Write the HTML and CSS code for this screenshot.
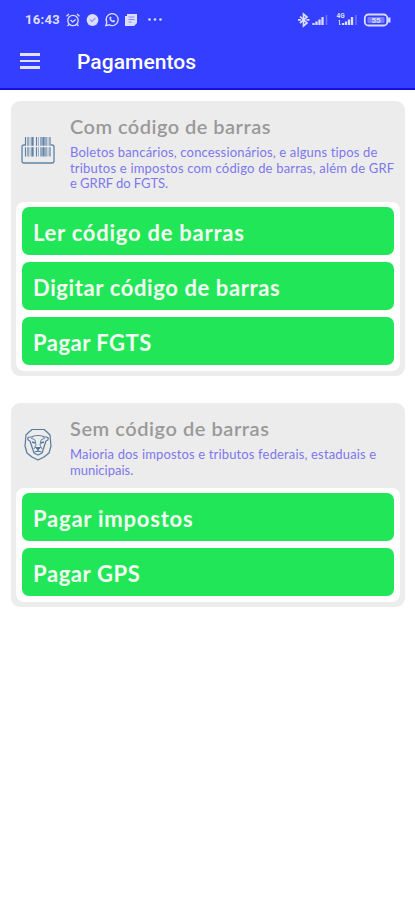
FILE: index.html
```html
<!DOCTYPE html>
<html lang="pt-BR">
<head>
<meta charset="utf-8">
<meta name="viewport" content="width=device-width, initial-scale=1">
<title>Pagamentos</title>
<link rel="stylesheet" href="styles.css">
</head>
<body>
<header class="header">
  <div class="status">
    <time class="clock">16:43</time>
    <svg class="status-left" width="98" height="16" viewBox="0 0 98 16" fill="none" stroke="currentColor" stroke-width="1.3">
      <circle cx="8" cy="8.5" r="5.2"/><path d="M5.5 8l2.2 2 3-2.5M1.500 4.200L4 2M12 2l2.500 2.200M4 12.500l-1.500 1.500M12 12.500l1.500 1.500"/>
      <circle cx="27.500" cy="8" r="5.900" fill="currentColor" stroke="none"/><path d="M25 7.500l2 2 3.300-3.500" stroke="#9b9cff"/>
      <path d="M40.800 13.700l1-3.400A6 6 0 1 1 44.200 12.800z"/><path d="M44.500 5.200c-.8 2.400 2.600 6 5 5l.6-1.500-1.800-.8-.8.8-1.600-1.700.7-.9-.7-1.500z" fill="currentColor" stroke="none"/>
      <path d="M62 2h10v9l-3 3h-9V4h2z" fill="currentColor" stroke="none"/><path d="M63.500 5h6M63.500 7.500h6M63.500 10h3" stroke="#8586ff" stroke-width="1"/>
      <g fill="currentColor" stroke="none"><circle cx="84.500" cy="7.500" r="1.300"/><circle cx="90" cy="7.500" r="1.300"/><circle cx="95.500" cy="7.500" r="1.300"/></g>
    </svg>
    <svg class="status-right" width="94" height="16" viewBox="0 0 94 16" fill="none" stroke="currentColor">
      <path d="M2 4.500l7 6.500-3.500 3V2L9 5l-7 6" stroke-width="1.700"/><path d="M0 7.800h3M8.500 7.800h3" stroke-width="1.700"/>
      <g stroke-width="2.300"><path d="M15.500 13v-2M18.500 13V9.500M21.500 13V7.500M24.500 13V5"/><path d="M28.500 13V3" stroke-width="1.500" opacity=".35"/><path d="M45 13v-2M48 13V9.500M51 13V7.500M54 13V5"/><path d="M58 13V3" stroke-width="1.500" opacity=".35"/></g>
      <path d="M41.500 8v5M40.500 9l1-1M42.500 12l-1 1" stroke-width=".9"/>
      <text class="network" x="38.500" y="5.800">4G</text>
      <rect x="66.800" y="2.500" width="22.500" height="11" rx="3.500" stroke-width="1.800"/><path d="M91.300 5.500v5" stroke-width="2.300"/>
      <rect x="69.500" y="5" width="17" height="6" rx="1" fill="currentColor" stroke="none" opacity=".4"/>
      <text class="charge" x="73.500" y="10.900">55</text>
    </svg>
  </div>
  <div class="toolbar">
    <button class="menu" aria-label="Menu"><i></i><i></i><i></i></button>
    <h1>Pagamentos</h1>
  </div>
</header>
<main>
  <section class="card card-barcode">
    <div class="intro">
      <svg class="icon" width="34" height="30" viewBox="0 0 34 30" fill="none" stroke="#5f82a6">
        <path d="M4.500 9H3a2 2 0 0 0-2 2v14a2 2 0 0 0 2 2h28a2 2 0 0 0 2-2V11a2 2 0 0 0-2-2h-1.500" stroke-width="1.300"/>
        <path d="M4.500 1v19.500M7 1v19.500M15.500 1v19.500M20 1v19.500M25 1v19.500M29 1v19.500" stroke-width="1.200"/>
        <path d="M11.500 1v19.500M22.500 1v19.500" stroke-width="2.300"/><path d="M9 1v19.500M17.500 1v19.500M27 1v19.500" stroke="#9bb2c9" stroke-width="1"/>
        <path d="M2.500 10.500h29" stroke="#ededed" stroke-width="1.400"/>
      </svg>
      <div class="copy">
        <h2>Com código de barras</h2>
        <p><span class="line line-a">Boletos bancários, concessionários, e alguns tipos de</span> <span class="line line-b">tributos e impostos com código de barras, além de GRF</span> <span class="line line-c">e GRRF do FGTS.</span></p>
      </div>
    </div>
    <div class="actions">
      <button class="action read">Ler código de barras</button>
      <button class="action type">Digitar código de barras</button>
      <button class="action fgts">Pagar FGTS</button>
    </div>
  </section>
  <section class="card card-tax">
    <div class="intro">
      <svg class="icon lion" width="34" height="34" viewBox="0 0 34 34" fill="none" stroke="#57799d" stroke-linejoin="round">
        <path d="M11 1.500h12l3 2.500 3 3 1 11-2 7-5 4-6 3-6-3-5-4-2-7 1-11 3-3z" stroke-width="1.200"/>
        <path d="M9 13c-3-1-3-4 0-4h2c2-2 10-2 12 0h2c3 0 3 3 0 4l-2 6-2 6-4 2-4-2-2-6z" stroke-width="1.200"/>
        <path d="M10 10l4 2 1 5-2 4M24 10l-4 2-1 5 2 4" stroke-width=".9"/>
        <path d="M11 14l3 1M23 14l-3 1" stroke-width="1.600"/><path d="M14.500 19.500h5L17 22zM17 22v2M13.500 24l3.500-1 3.500 1" fill="#57799d"/>
      </svg>
      <div class="copy">
        <h2>Sem código de barras</h2>
        <p><span class="line line-d">Maioria dos impostos e tributos federais, estaduais e</span> <span class="line line-e">municipais.</span></p>
      </div>
    </div>
    <div class="actions">
      <button class="action taxes">Pagar impostos</button>
      <button class="action gps">Pagar GPS</button>
    </div>
  </section>
</main>
</body>
</html>
```
FILE: styles.css
```css
* { box-sizing: border-box; }
body { margin: 0; background: #fff; font-family: Lato, sans-serif; }
h1, h2, p { margin: 0; }
button { border: 0; margin: 0; font: inherit; }

.header { height: 90px; background: #343eff; border-bottom: 2px solid #1512dd; color: #fff; padding-top: 12px; }
.status { display: flex; align-items: center; height: 16px; padding: 0 23px 0 25px; color: #dcdeff; }
.clock { width: 40px; font: 700 13px/16px Roboto, sans-serif; letter-spacing: .3px; }
.status-right { margin-left: auto; }
.network { font: 700 6.500px Roboto, sans-serif; fill: currentColor; stroke: none; }
.charge { font: 700 8px Roboto, sans-serif; fill: currentColor; stroke: none; }
.toolbar { display: flex; align-items: center; height: 60px; padding: 8px 20px 0; gap: 37px; }
.toolbar h1 { font: 500 21px/30px Roboto, sans-serif; letter-spacing: .05px; }
.menu { display: flex; flex-direction: column; gap: 4px; width: 20px; padding: 0 0 2px; background: none; }
.menu i { height: 2.500px; background: #e0e2ff; }

main { display: flex; flex-direction: column; gap: 27px; padding: 11px 10px 0 11px; }
.card { background: #edecec; border-radius: 9px; padding: 0 5px 5px; }
.intro { display: flex; height: 101px; padding: 13px 0 0 5px; gap: 15px; }
.card-tax .intro { height: 85px; }
.icon { flex: none; margin-top: 22px; }
.lion { margin-top: 12px; }
h2 { font-size: 20px; font-weight: 600; line-height: 24px; letter-spacing: .47px; color: #999; white-space: nowrap; }
.card-tax h2 { letter-spacing: .55px; }
p { margin-top: 7px; font-size: 13px; line-height: 15.700px; color: #7c77ed; }
.line { display: block; white-space: nowrap; }
.line-a { letter-spacing: .16px; }
.line-b { letter-spacing: .2px; }
.line-c { letter-spacing: -.05px; }
.line-d { letter-spacing: .15px; }
.actions { display: flex; flex-direction: column; gap: 7px; padding: 5px 6px 6px; border-radius: 8px; background: #fff; }
.action { height: 48px; padding: 4px 11px 0; border-radius: 7px; background: #21e658; color: #f5fff3; font-size: 22px; font-weight: 700; line-height: 28px; text-align: left; white-space: nowrap; }
.read { letter-spacing: .75px; }
.type { letter-spacing: .61px; }
.fgts { letter-spacing: .5px; }
.taxes { letter-spacing: .78px; }
.gps { letter-spacing: .6px; }
```
